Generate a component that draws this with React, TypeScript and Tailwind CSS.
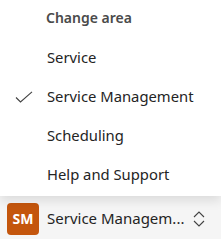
import { useState } from "react";

const areas = ["Service", "Service Management", "Scheduling", "Help and Support"];

const App = () => {
  const [selected, setSelected] = useState("Service Management");

  return (
    <div
      className="w-[221px] h-[239px] flex flex-col bg-[#f5f5f5] overflow-hidden"
      style={{ fontFamily: '"Noto Sans", "Open Sans", sans-serif' }}
    >
      <div className="relative z-10 bg-white shadow-[0_5px_10px_rgba(0,0,0,0.1)] pb-[2px]">
        <div className="h-[35px] mb-[3px] flex items-center pl-[46px] text-[14px] font-semibold text-[#4a4a4a]">
          Change area
        </div>
        {areas.map((area) => (
          <button
            key={area}
            type="button"
            onClick={() => setSelected(area)}
            className="w-full h-[39px] flex items-center text-left text-[14.8px] text-[#242424]"
          >
            <span className="w-[47px] flex justify-center pl-[1px]">
              {selected === area ? (
                <svg width="18" height="12" viewBox="0 0 18 12" fill="none">
                  <path d="M1 6.5 L5.5 11 L17 0.8" stroke="#424242" strokeWidth="1.1" />
                </svg>
              ) : null}
            </span>
            {area}
          </button>
        ))}
      </div>
      <div className="flex-1 flex items-center pl-[7px] pr-[16px] pt-[2px]">
        <div className="w-[32px] h-[32px] rounded-[4px] bg-[#c4560d] flex items-center justify-center text-white text-[14px] font-bold">
          SM
        </div>
        <span className="ml-[8px] text-[15px] text-[#242424] truncate">Service Managem...</span>
        <svg className="ml-auto shrink-0" width="12" height="16" viewBox="0 0 12 16" fill="none">
          <path d="M1 6 L6 1 L11 6" stroke="#424242" strokeWidth="1.1" />
          <path d="M1 10 L6 15 L11 10" stroke="#424242" strokeWidth="1.1" />
        </svg>
      </div>
    </div>
  );
};

export default App;
